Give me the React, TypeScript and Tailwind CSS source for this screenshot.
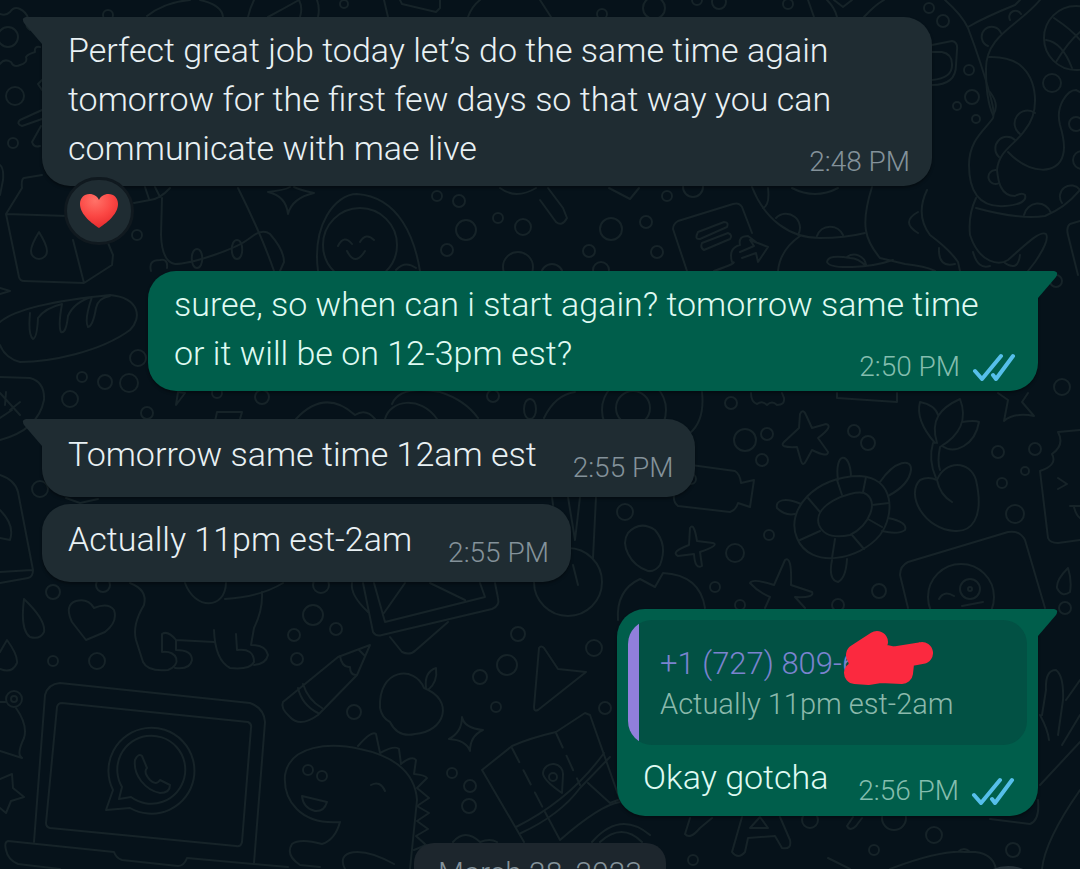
import type { ReactNode } from 'react'
import clsx from 'clsx'

type Side = 'in' | 'out'

interface Message {
  id: number
  side: Side
  lines: string[]
  time: string
  tail: boolean
  reaction?: boolean
  quote?: { author: string; text: string }
  spacing: string
}

const messages: Message[] = [
  {
    id: 1,
    side: 'in',
    lines: [
      'Perfect great job today let’s do the same time again',
      'tomorrow for the first few days so that way you can',
      'communicate with mae live'
    ],
    time: '2:48 PM',
    tail: true,
    reaction: true,
    spacing: 'mt-[17px]'
  },
  {
    id: 2,
    side: 'out',
    lines: ['suree, so when can i start again? tomorrow same time', 'or it will be on 12-3pm est?'],
    time: '2:50 PM',
    tail: true,
    spacing: 'mt-[85px]'
  },
  { id: 3, side: 'in', lines: ['Tomorrow same time 12am est'], time: '2:55 PM', tail: true, spacing: 'mt-7' },
  { id: 4, side: 'in', lines: ['Actually 11pm est-2am'], time: '2:55 PM', tail: false, spacing: 'mt-[7px]' },
  {
    id: 5,
    side: 'out',
    lines: ['Okay gotcha'],
    time: '2:56 PM',
    tail: true,
    quote: { author: '+1 (727) 809-6', text: 'Actually 11pm est-2am' },
    spacing: 'mt-[27px]'
  }
]

// cx, cy, r
const bubbles = [
  [8, 37, 10], [108, 15, 5], [344, 4, 4], [15, 96, 9], [13, 143, 5], [137, 235, 5], [437, 196, 5], [459, 201, 6],
  [466, 230, 10], [498, 218, 5], [523, 227, 8], [447, 250, 6], [518, 267, 15], [602, 14, 5], [654, 8, 11], [697, 0, 5],
  [719, 2, 7], [788, 4, 5], [667, 196, 5], [693, 187, 10], [611, 229, 11], [646, 222, 6], [589, 251, 6], [657, 252, 6],
  [552, 275, 11], [601, 270, 8], [929, 8, 5], [943, 21, 6], [969, 70, 5], [972, 97, 7], [957, 106, 4], [976, 119, 4],
  [1052, 83, 9], [1076, 124, 7], [1082, 160, 9], [138, 358, 8], [82, 377, 5], [105, 382, 7], [129, 383, 9], [70, 399, 8],
  [147, 413, 6], [262, 397, 7], [217, 393, 5], [493, 396, 6], [40, 489, 8], [731, 403, 6], [745, 440, 11], [767, 434, 6],
  [762, 460, 6], [854, 431, 6], [868, 443, 7], [625, 512, 8], [769, 535, 5], [735, 553, 9], [715, 587, 5], [879, 591, 7],
  [740, 605, 5], [838, 605, 6], [691, 479, 5], [1062, 387, 8], [998, 452, 6], [1035, 449, 6], [1025, 471, 4],
  [1002, 483, 5], [1015, 514, 9], [1065, 608, 6], [1056, 281, 6], [53, 592, 7], [103, 585, 7], [53, 661, 5], [97, 661, 8],
  [321, 585, 8], [313, 615, 10], [336, 629, 6], [294, 635, 6], [297, 659, 6], [354, 712, 7], [518, 634, 7], [507, 665, 10],
  [480, 677, 7], [496, 707, 5], [452, 773, 5], [470, 786, 6], [469, 806, 7], [594, 648, 8], [605, 708, 6], [810, 820, 8],
  [894, 818, 12], [934, 835, 8], [874, 850, 5], [1013, 850, 7], [693, 860, 5], [360, 245, 37], [1076, 38, 32],
  [633, 408, 17], [634, 410, 32], [961, 597, 33], [970, 589, 10], [970, 589, 2], [14, 699, 8], [14, 699, 3], [308, 770, 5],
  [322, 776, 5], [553, 777, 4], [568, 582, 34]
]

const doodles = [
  // gear, sticks and the sheets along the top edge
  'M0 14Q6 16 10 12Q14 6 20 9Q26 12 28 18Q24 26 30 30M40 47Q34 46 35 52Q28 54 26 57Q28 63 20 65Q14 68 11 62Q4 58 0 64',
  'M147 16Q165 2 190 0M200 0Q222 5 223 17M248 17Q250 8 254 0M268 17Q285 8 299 0Q303 8 300 17M317 0Q320 8 318 17',
  'M384 0L388 17M400 0L402 4L436 12L440 8V0M468 17Q472 6 480 0M540 0L551 17',
  'M808 0L814 17M827 0Q835 8 837 17M834 0L843 7L852 0M864 17Q875 5 884 0',
  'M42 110L20 120Q16 124 22 126L42 119M41 126L32 142Q34 148 40 146M0 165Q4 168 3 180L0 195M42 80L38 84L42 90',
  // milk carton
  'M42 175L24 178Q21 179 22 188L6 214L19 277Q20 281 24 281L84 283L112 265L113 255L108 243M6 214L68 216M73 240L84 283',
  'M39 232Q31 245 31 251A8 8 0 0 0 47 251Q47 245 39 232Z',
  // bag
  'M145 187L149 199M155 187L160 197M134 203L150 200Q160 199 170 188M162 198L161 235Q162 262 175 264C190 264 235 250 250 238Q262 228 270 234Q284 250 284 262L280 271',
  'M238 188Q262 236 274 271M151 271Q148 260 160 260Q168 258 167 268M197 249c7 0 7 19 0 19s-7-19 0-19M237 240c7 0 7 19 0 19s-7-19 0-19',
  'M268 192Q285 190 290 187M268 192Q286 196 288 214Q292 198 314 193Q300 190 294 187',
  // nesting doll
  'M318 271C312 225 335 194 357 194C400 197 415 240 420 271M338 246Q344 234 352 244M360 242Q366 232 374 240M347 251Q355 267 365 251M396 270Q405 260 416 268M500 188Q516 200 536 188',
  // note with arrow
  'M540 200L556 222Q562 227 567 218L563 208L548 188M609 188L630 199L639 188',
  'M687 271L673 229Q673 224 678 221L733 204Q739 202 742 207L752 233M698 232L724 222Q729 222 727 227L700 239Q694 240 698 232ZM702 243L728 233q5 2 2 6L704 250q-4-2-2-7Z',
  'M714 271Q740 262 732 262Q728 248 740 245Q738 236 748 236L756 242M740 252L754 246L750 240L768 247L758 262L756 253L742 258',
  // octopus
  'M752 187C765 220 790 238 820 238Q845 238 865 233M768 188Q770 205 763 208M776 218A14 14 0 0 1 798 235M817 236A14 14 0 0 1 843 235M792 188Q815 200 838 188',
  'M872 187C860 225 865 240 880 258L905 264Q925 266 935 271M800 236Q780 250 778 271M893 260C870 268 830 270 827 262Q828 254 850 258Q858 258 866 266M847 257A12 12 0 0 1 866 265',
  'M927 190Q915 215 930 235Q950 250 958 262L960 271M939 248Q938 268 955 264M918 212Q900 222 918 233',
  'M945 0Q962 15 968 28Q982 65 990 95Q995 112 993 118C985 130 969 140 969 165C969 190 978 208 1005 206Q1028 204 1025 195Q1022 192 1015 196C1000 196 998 180 997 170C999 150 1015 145 1025 130C1040 112 1038 80 1020 65Q1008 56 988 57',
  'M968 27Q985 17 1015 5L1020 0M1040 0C1020 25 985 35 986 70Q986 100 993 115Q1000 105 990 92M988 46A10 10 0 1 1 1001 33M1010 20A6 6 0 1 1 1021 14M1035 113A11 11 0 1 0 1020 134M1015 140A11 11 0 1 0 999 157M996 170A7 7 0 1 0 999 183',
  'M1008 152C1030 175 1058 175 1063 155Q1066 145 1060 125C1055 105 1068 90 1076 90L1080 92',
  'M976 198Q968 215 970 235C980 265 1000 265 1008 260C1025 245 1040 230 1046 234Q1050 240 1035 262L1028 271M976 208Q1020 220 1045 216Q1065 208 1080 190M1024 215A14 14 0 0 1 1051 213M1062 203A10 10 0 0 1 1080 190M973 252Q978 270 990 266M1005 263Q1018 272 1020 255M1080 221L1070 224Q1066 227 1068 235L1078 275',
  'M932 45L952 41Q958 42 957 50L956 65Q956 85 932 85M932 52L942 52Q952 54 952 64Q953 78 932 80M1054 18Q1072 30 1080 40M1046 40Q1062 42 1072 68M1080 32Q1068 42 1056 62',
  // bread and leaf
  'M0 322C20 305 80 298 110 295C140 298 142 318 130 330C100 352 50 362 20 362Q5 358 0 345M30 313Q28 335 33 339Q37 338 38 318Q45 308 62 304Q58 326 61 332Q66 334 68 316Q74 302 92 297Q84 320 88 327Q93 326 96 308Q98 298 110 296M0 288L10 291L0 294',
  'M0 377L30 378Q45 382 44 400Q38 430 0 440M0 393L20 415M5 405L6 392M10 410L20 402M0 418L12 410',
  'M176 405L185 393L178 392ZM214 426L217 412L242 412L240 419M296 419Q325 388 355 415Q366 408 375 419M385 419C390 400 420 395 437 419M392 404Q400 385 440 392Q465 400 478 418M530 399c8 0 8 20 0 20s-8-20 0-20',
  'M0 475Q15 480 18 492L33 570Q33 577 28 578L0 583M0 572L32 570M0 510Q15 525 10 540L0 538M66 498L80 503L98 499',
  // gear, stars, camera
  'M544 418Q555 395 575 392M702 392Q705 420 690 433M751 393Q751 402 757 404Q762 400 767 405Q772 400 777 405Q785 405 784 398L782 393M837 393V398L897 402V393',
  'M800 414Q803 408 806 415L812 428L826 424Q834 426 818 438L828 452Q828 458 812 450L806 461Q803 467 801 461L797 447Q778 448 784 442L799 428Z',
  'M691 465L735 471Q740 474 741 483L754 480L750 507L738 503Q736 510 730 512L678 506Q673 502 674 495',
  // turtle
  'M797 538C785 510 815 476 860 476C895 478 895 515 880 535C860 560 810 570 797 538ZM819 525C812 505 850 490 864 493C880 500 870 525 850 535Q825 540 819 525Z',
  'M838 480C834 452 850 450 851 476M880 482C895 460 912 458 911 470Q909 485 888 496M801 504C785 497 775 500 777 508Q785 516 795 514M888 518Q908 522 905 530Q898 535 882 531M832 560Q828 580 838 582Q846 578 847 559',
  'M837 480L842 495M866 477L863 492M872 505L889 503M868 519L882 527M852 535L864 549M835 539L832 558M820 531L800 540M820 512L808 498',
  // sprout
  'M935 443Q915 420 920 402Q935 405 938 415M937 443C930 420 940 408 960 399C968 420 960 435 940 447M962 422Q975 420 979 422C975 445 955 455 942 446M933 443Q928 460 936 478M940 447Q937 462 940 470',
  'M937 480C945 460 970 460 976 480C985 520 970 532 955 531C925 530 905 495 920 480Q928 476 937 480Q940 495 952 502',
  'M998 393L1008 400L1004 421Q1015 412 1034 416L1022 402L1028 393',
  // cookie, drop, photo
  'M1080 430L1058 432Q1065 445 1052 454Q1058 465 1040 471L1048 538Q1050 543 1058 543L1080 540M1058 478L1067 484L1058 489M1070 506H1080M1074 507Q1076 515 1080 518',
  'M1068 568Q1056 580 1057 588Q1062 598 1070 592Q1072 580 1068 568ZM908 608L900 575Q900 566 908 562L1008 532Q1020 530 1025 540L1045 608M939 599Q944 590 954 596M962 606L983 602',
  // person, plus, starfish, carrot
  'M648 571C630 565 620 545 628 533Q640 520 655 530Q668 545 660 565Q655 572 648 571ZM618 620Q616 590 640 579L655 587L663 573Q700 575 705 608',
  'M690 528Q694 522 697 541L713 543Q720 545 700 552L702 566Q695 570 694 554L678 556Q670 552 689 545ZM785 560Q792 555 791 585L812 592Q815 598 795 597L805 608M785 560L774 585Q752 578 750 583Q758 592 770 597L765 608',
  'M573 565L578 585M568 497L575 540L580 497M596 497L593 558M552 497L553 505',
  // drops and heart
  'M24 599Q46 620 44 632Q40 640 30 637Q20 630 24 599ZM0 652L7 640Q18 655 17 663Q12 674 0 669M86 640L72 622Q64 605 76 601Q88 598 94 608Q108 602 114 610Q118 622 105 632Z',
  // dog
  'M130 583Q148 590 144 605Q132 625 136 640L143 662Q148 672 168 670C182 665 178 650 162 652V634Q168 630 176 640L214 642M176 640V650Q192 650 192 660Q190 670 175 668M214 630Q215 660 230 668Q250 670 254 662Q254 648 237 650L236 634',
  'M262 592Q263 610 254 628L251 645Q266 645 268 655Q266 664 254 665M185 583C195 610 225 610 226 583M225 599Q260 597 283 583',
  // laptop
  'M34 842L45 695Q48 684 60 683L250 703Q264 708 265 722L254 863M57 707Q58 703 62 703L248 722Q252 724 251 728L242 842Q241 847 236 846L50 828Q46 827 46 823Z',
  'M288 867L187 858Q184 866 178 866L122 860Q116 858 114 852L8 841Q4 842 6 850Q8 860 18 864L60 869',
  'M106 810L113 790A43 43 0 1 1 130 808ZM119 799L122 787A34 34 0 1 1 131 797Z',
  'M135 760Q138 753 142 756L147 768Q143 772 150 780Q156 786 160 780L170 785Q170 793 160 793C145 790 133 775 135 760Z',
  'M0 702H6M16 708Q28 725 24 738Q16 755 22 758L0 751M0 779L12 774L13 788L24 797L11 801L6 813L0 808',
  // pencil
  'M338 657L370 645L357 675L318 715Q300 728 290 717Q280 708 283 702ZM340 656Q342 668 350 667Q350 675 356 675M359 650L365 656M298 688Q302 705 318 713M303 684Q308 700 322 708',
  // stacked pictures
  'M363 583L373 632Q376 637 382 635L492 609Q500 606 498 598L495 583M374 583L385 622L485 597L480 583M384 613L405 583M430 583L465 600M352 583Q350 595 368 612M390 637L402 652Q410 656 416 650L448 622',
  // apple and sparkle
  'M424 688C415 665 378 668 380 708Q382 718 390 722Q398 738 415 734C445 732 455 700 424 688ZM426 688Q424 672 436 668Q438 682 428 690M462 717Q464 728 483 730Q470 736 470 751Q466 740 449 739Q462 732 462 717Z',
  // dinosaur
  'M340 822C300 825 283 800 285 775C290 745 330 742 360 749C390 755 415 770 417 800L410 869M340 822Q335 840 322 844Q300 838 292 844Q285 855 300 865L320 867M302 796L327 802Q324 812 315 811Q303 808 302 796ZM371 785Q380 780 385 791M345 869C335 850 360 845 394 864',
  'M358 746Q372 730 376 734L380 753Q395 745 399 749L401 764Q412 755 416 760L414 774Q425 775 427 778L417 788L429 798L417 806L429 813L417 821L428 829L416 836L426 845L414 850',
  // paper plane and map
  'M539 648Q541 645 544 648L558 669L586 672L538 710Q534 712 534 707ZM524 842L482 770L512 746Q530 738 556 732L585 713L590 715L620 800M516 827Q570 800 604 753M521 833Q560 815 580 788L610 757M588 783L610 803L618 800',
  'M562 793Q543 780 543 773A10 10 0 1 1 563 775ZM545 812L560 840Q600 805 620 802M592 842Q620 810 650 835M453 842Q465 828 480 842Q490 838 497 842M600 842Q622 822 642 842',
  // bottom right letters and hand
  'M690 818L685 834Q690 840 700 828L712 818M742 817L732 852Q738 860 745 852L748 838L775 836L782 848Q792 850 790 840L780 817M750 828L760 817L768 828ZM853 817L847 826Q850 832 856 826L862 818M990 819L1030 824Q1040 820 1038 800M828 858L850 869M890 869Q940 850 965 852Q992 850 996 869M958 852q6-6 12 0',
  'M1040 715Q1048 730 1049 740M1046 690Q1045 670 1056 670Q1064 676 1063 700L1058 735M1046 690L1042 715M1066 700L1080 680M1062 745L1080 715M1040 785L1080 742M1080 790Q1045 840 1042 869'
]

function Wallpaper() {
  return (
    <svg
      aria-hidden="true"
      viewBox="0 0 1080 869"
      preserveAspectRatio="xMidYMin slice"
      className="absolute inset-0 h-full w-full fill-none stroke-[#162328] stroke-2"
      strokeLinecap="round"
      strokeLinejoin="round"
    >
      {doodles.map((d, i) => (
        <path key={i} d={d} />
      ))}
      {bubbles.map(([cx, cy, r], i) => (
        <circle key={i} cx={cx} cy={cy} r={r} />
      ))}
      <path d="M512 748L545 812M556 733L580 785" strokeDasharray="16 9" />
    </svg>
  )
}

function Tail({ side }: { side: Side }) {
  return (
    <svg
      aria-hidden="true"
      viewBox="0 0 20 28"
      className={clsx(
        'absolute top-0 h-7 w-5',
        side === 'in' ? 'right-full fill-[#1f2c32]' : 'left-full -scale-x-100 fill-[#005e4b]'
      )}
    >
      <path d="M20 0H4Q-1 1 2 6L20 27Z" />
    </svg>
  )
}

function Ticks() {
  return (
    <svg role="img" aria-label="Read" viewBox="0 0 44 28" className="h-7 w-11 fill-none stroke-[#56bfea] stroke-[4]" strokeLinecap="round" strokeLinejoin="round">
      <path d="M3 18L10 26L29 3" />
      <path d="M21 22L24 26L41 3" />
    </svg>
  )
}

function Reaction() {
  return (
    <button
      type="button"
      aria-label="Heart reaction"
      className="absolute top-[160px] left-[22px] flex h-[68px] w-[70px] items-center justify-center rounded-full border-[3px] border-[#10191f] bg-[#1f2c32]"
    >
      <svg aria-hidden="true" viewBox="0 0 40 36" className="h-9 w-10">
        <defs>
          <radialGradient id="heart" cx="0.4" cy="0.2" r="0.9">
            <stop offset="0" stopColor="#ff7268" />
            <stop offset="0.5" stopColor="#fb4744" />
            <stop offset="1" stopColor="#e32428" />
          </radialGradient>
        </defs>
        <path
          fill="url(#heart)"
          d="M20 35C14 31 1 22 1 11C1 5 5 1 10.500 1C15 1 18.500 3.500 20 7C21.500 3.500 25 1 29.500 1C35 1 39 5 39 11C39 22 26 31 20 35Z"
        />
      </svg>
    </button>
  )
}

function Quote({ author, children }: { author: string; children: ReactNode }) {
  return (
    <blockquote className="flex overflow-hidden rounded-3xl bg-[#025144]">
      <span className="w-[11px] shrink-0 bg-[#917fdc]" />
      <div className="px-[21px] pt-6 pb-[21px] leading-10">
        <p className="relative w-fit text-[31px] text-[#7b83cf]">
          {author}
          <svg
            aria-hidden="true"
            viewBox="0 0 90 56"
            className="absolute top-[-14px] left-[183px] h-14 w-[90px] fill-none stroke-[#fb293f] stroke-[22]"
            strokeLinecap="round"
            strokeLinejoin="round"
          >
            <path d="M14 25L34 12L16 30L34 24L52 28L79 23L54 27L20 36L12 43L26 44L38 42L59 43L60 34L40 34" />
          </svg>
        </p>
        <p className="text-[29px] text-[#8bb9ac]">{children}</p>
      </div>
    </blockquote>
  )
}

function Bubble({ message }: { message: Message }) {
  const { side, lines, time, tail, quote, reaction, spacing } = message
  const out = side === 'out'
  const multiline = lines.length > 1
  const last = lines[lines.length - 1]

  return (
    <li className={clsx('flex', spacing, out && 'justify-end')}>
      <article
        className={clsx(
          'relative rounded-[28px] shadow-[0_2px_3px_rgba(0,0,0,0.35)]',
          out ? 'bg-[#005e4b] text-[#dffaf2]' : 'bg-[#1f2c32] text-[#e9f1f4]',
          tail && (out ? 'rounded-tr-none' : 'rounded-tl-none'),
          multiline && 'w-[890px] max-w-full pt-[9px] pb-[10px]',
          quote && 'w-[421px] max-w-full p-[11px]',
          !quote && !multiline && 'pt-[11px] pb-[15px]'
        )}
      >
        {tail && <Tail side={side} />}
        {quote && <Quote author={quote.author}>{quote.text}</Quote>}
        <div className={clsx('text-[34px] leading-[49px]', quote ? 'mt-2 pr-3 pl-[15px]' : 'pr-[22px] pl-[26px]')}>
          {lines.slice(0, -1).map(line => (
            <p key={line}>{line}</p>
          ))}
          <div className="flex justify-between">
            <p>{last}</p>
            <div
              className={clsx(
                'mt-6 flex items-center gap-3 text-[28px] leading-7 whitespace-nowrap',
                out ? 'text-[#84bdae]' : 'ml-9 text-[#84929a]'
              )}
            >
              <time>{time}</time>
              {out && <Ticks />}
            </div>
          </div>
        </div>
        {reaction && <Reaction />}
      </article>
    </li>
  )
}

export default function App() {
  return (
    <main className="relative h-screen overflow-hidden bg-[#06121a] font-['Roboto','Liberation_Sans',sans-serif] font-light">
      <Wallpaper />
      <ol className="relative flow-root px-[42px]">
        {messages.map(message => (
          <Bubble key={message.id} message={message} />
        ))}
      </ol>
      <div className="relative mt-[27px] flex justify-center">
        <span className="rounded-[20px] bg-[#1d262d] px-6 py-3 text-[30px] leading-9 text-[#84929a]">March 28, 2023</span>
      </div>
      <button
        type="button"
        aria-label="Scroll to latest"
        className="absolute top-full right-8 -mt-[3px] h-20 w-20 rounded-full bg-[#27333a]"
      />
    </main>
  )
}
